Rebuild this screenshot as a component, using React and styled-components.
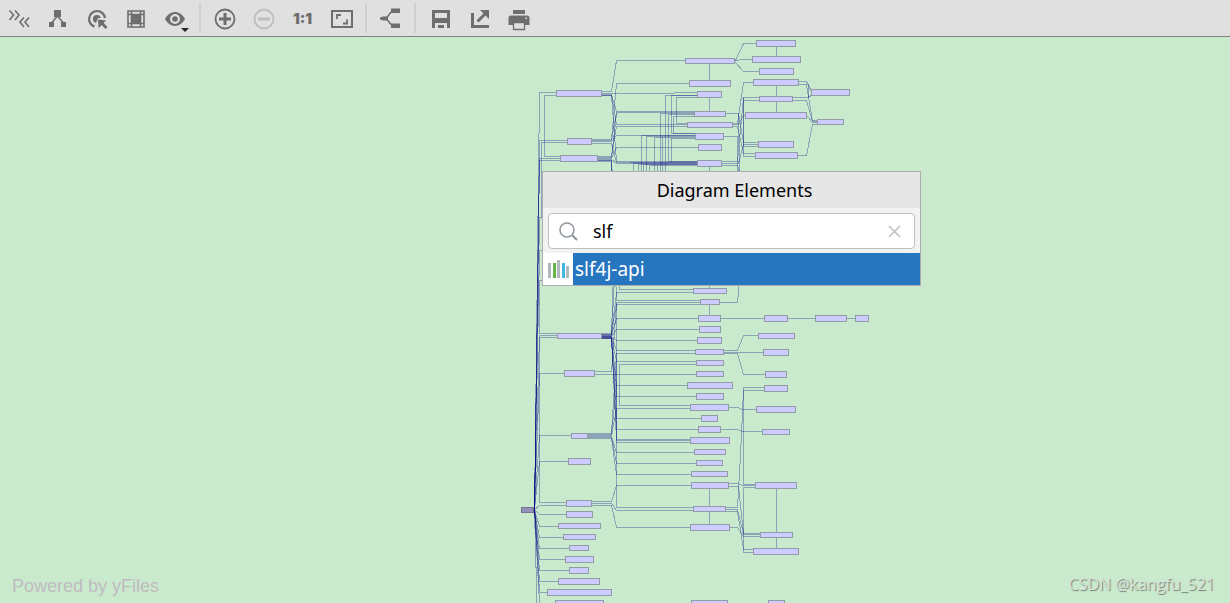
import React from 'react'
import styled, { createGlobalStyle } from 'styled-components'

const GlobalStyle = createGlobalStyle`
* {
  box-sizing: border-box;
}
body {
  margin: 0;
  background: #caeacd;
  font-family: 'Noto Sans', 'Open Sans', sans-serif;
}
`
const Page = styled.div`
display: flex;
flex-direction: column;
min-height: 100vh;
`
const Toolbar = styled.header`
display: flex;
align-items: center;
height: 37px;
background: #e0e0e0;
border-bottom: 1px solid #808080;
`
const ToolButton = styled.button`
display: flex;
align-items: center;
justify-content: center;
width: 39px;
height: 36px;
padding: 0;
border: 0;
background: none;
color: ${props => props.disabled ? '#bdbdbd' : '#6e6e6e'};
font: 900 15px Inter, 'Liberation Sans', sans-serif;
`
const Icon = styled.svg`
width: 25px;
height: 26px;
fill: currentColor;
overflow: visible;
`
const Separator = styled.span`
width: 2px;
height: 30px;
margin: 0 4px;
background: #cfcfcf;
`
const Canvas = styled.main`
position: relative;
flex: 1;
overflow: hidden;
`
const Graph = styled.svg`
position: absolute;
top: 0;
left: 0;
width: 1230px;
height: 566px;
shape-rendering: crispEdges;
`
const Edge = styled.path`
fill: none;
stroke: rgba(0, 0, 128, 0.3);
stroke-linecap: square;
`
const Node = styled.rect`
fill: ${props => props.$root ? '#9090b8' : '#ccccff'};
stroke: ${props => props.$root ? '#737390' : '#929ba6'};
`
const Popup = styled.section`
position: absolute;
top: 134px;
left: 542px;
width: 379px;
border: 1px solid #adadad;
background: #f2f2f2;
`
const PopupTitle = styled.h1`
margin: 0;
padding-left: 6px;
background: #e6e6e6;
font-size: 18px;
font-weight: 400;
line-height: 36px;
text-align: center;
color: #000;
`
const SearchBox = styled.label`
display: flex;
align-items: center;
height: 36px;
margin: 5px 5px 4px;
padding: 0 10px 0 9px;
border: 1px solid #c0c0c0;
border-radius: 4px;
background: #fff;
`
const SearchInput = styled.input`
flex: 1;
min-width: 0;
margin-left: 14px;
padding: 0;
border: 0;
outline: 0;
font: 18px 'Noto Sans', sans-serif;
color: #000;
`
const ClearButton = styled.button`
display: flex;
padding: 3px;
border: 0;
background: none;
`
const Results = styled.ul`
margin: 0;
padding: 0;
list-style: none;
`
const Result = styled.li`
display: flex;
height: 32px;
background: #fff;
`
const ResultIcon = styled.span`
display: flex;
align-items: center;
justify-content: center;
width: 30px;
`
const ResultName = styled.span`
flex: 1;
padding-left: 2px;
background: #2675bf;
color: #fff;
font-size: 19px;
line-height: 32px;
`
const Powered = styled.span`
position: absolute;
left: 12px;
bottom: 6px;
font: 18px/22px 'Liberation Sans', sans-serif;
color: #c0bac1;
`
const Author = styled.span`
position: absolute;
right: 15px;
bottom: 8px;
font: 16px/22px 'Open Sans', sans-serif;
color: #d9e2da;
text-shadow: 1px 1px 1px #6f7d71;
`

// x, y, width, height
const nodes = [
  [556, 90, 46, 7], [567, 138, 25, 7], [560, 155, 38, 7], [557, 333, 45, 6],
  [564, 370, 31, 7], [571, 433, 17, 6], [568, 458, 23, 7], [566, 500, 26, 7],
  [566, 511, 27, 7], [558, 523, 43, 6], [563, 534, 33, 6], [569, 545, 20, 6],
  [565, 556, 29, 7], [569, 567, 20, 7], [558, 578, 42, 7], [547, 589, 65, 7],
  [555, 600, 49, 7],

  [685, 58, 50, 6], [689, 80, 42, 7], [697, 91, 25, 7], [694, 111, 32, 6],
  [687, 122, 46, 6], [695, 133, 29, 7], [698, 144, 24, 7], [697, 160, 25, 7],
  [693, 288, 34, 6], [700, 299, 20, 6], [698, 315, 23, 7], [699, 326, 22, 7],
  [697, 337, 25, 7], [695, 349, 29, 6], [696, 360, 28, 6], [696, 371, 28, 6],
  [687, 382, 46, 7], [696, 393, 28, 7], [690, 404, 39, 7], [701, 415, 17, 7],
  [698, 426, 23, 7], [690, 437, 40, 7], [694, 449, 32, 6], [696, 460, 27, 6],
  [691, 471, 37, 6], [691, 482, 38, 7], [693, 506, 33, 6], [690, 524, 40, 7],
  [691, 600, 37, 7],

  [756, 40, 40, 7], [752, 56, 49, 7], [759, 68, 35, 7], [753, 79, 46, 7],
  [759, 96, 34, 6], [745, 112, 62, 7], [758, 141, 36, 7], [755, 152, 43, 7],
  [764, 315, 24, 7], [758, 333, 37, 6], [763, 349, 26, 7], [765, 371, 22, 7],
  [764, 385, 24, 7], [756, 406, 40, 7], [762, 429, 28, 6], [755, 482, 42, 7],
  [760, 532, 33, 6], [753, 548, 46, 7], [768, 600, 17, 7],

  [811, 89, 39, 7], [817, 119, 27, 6], [815, 315, 32, 7], [855, 315, 14, 7],
]

// root to first column: y, x of the node
const rootEdges = [
  [92, 556], [140, 567], [158, 560], [160, 560], [217, 545], [250, 545],
  [335, 557], [373, 564], [435, 571], [461, 568], [505, 566], [514, 566],
  [526, 558], [537, 563], [548, 569], [559, 565], [570, 569], [581, 558],
  [592, 547], [603, 555], [700, 555],
]

// first to second column: start x, start y, end y, end x
const midEdges = [
  [602, 91, 60, 685], [602, 94, 111, 694], [602, 95, 124, 687], [602, 95, 161, 697],
  [592, 139, 83, 689], [592, 140, 112, 694], [592, 141, 135, 695], [592, 143, 162, 697],
  [598, 156, 126, 687], [598, 157, 113, 616], [598, 158, 147, 698], [598, 159, 163, 697],
  [598, 160, 240, 690], [598, 161, 300, 700], [598, 160, 280, 690],
  [602, 333, 180, 697], [602, 334, 240, 697], [602, 334, 292, 693],
  [602, 335, 302, 700], [602, 335, 318, 698], [602, 336, 329, 699], [602, 336, 340, 697],
  [602, 336, 350, 695], [602, 337, 361, 696], [602, 337, 385, 687], [602, 337, 396, 696],
  [602, 338, 418, 701], [602, 338, 429, 698], [602, 338, 439, 690],
  [595, 371, 304, 700],
  [588, 433, 353, 616], [588, 434, 385, 616], [588, 435, 408, 690], [588, 436, 452, 694],
  [588, 437, 463, 696], [588, 438, 474, 691],
  [592, 501, 485, 691], [592, 503, 510, 693], [592, 505, 527, 690],
]

// third column links and everything that runs inside one column
const otherEdges = [
  'M556 95H544V156H560', 'M567 142H541V217', 'M545 280H539V333H557', 'M557 337H539V502H566',
  'M602 93H650L697 92', 'M595 374H696',
  'M697 95H665V172', 'M697 95H671V133H695', 'M697 97H676V123H687',
  'M694 113H660V172', 'M694 114H668V161H697', 'M694 116H673V133H695',
  'M695 135H641V172', 'M695 136H646V172', 'M695 137H654V172', 'M662 137V172',
  'M671 138V161', 'M695 138H671', 'M697 162H630',
  'M697 163H633V172', 'M697 164H638V172', 'M697 164H643V172', 'M697 165H649V172', 'M657 165V172',
  'M693 289H619V280', 'M616 303V353', 'M696 364H619V405H690', 'M695 353H616V439',
  'M690 442H616V361', 'M690 440H616V507H693',
  'M709 64V80', 'M709 98V111', 'M709 167V175', 'M709 280V288', 'M709 305V315', 'M709 489V506', 'M709 512V524',
  'M776 47V56', 'M776 86V96', 'M776 102V112', 'M776 489V532', 'M776 538V548',

  'M735 60L743 43H756', 'M735 60L743 59H752', 'M735 62L743 71H759',
  'M726 113H738L743 142H758', 'M733 123H737L743 82H753', 'M733 124H738L743 115H745',
  'M733 126H737L743 153H755', 'M724 136H737V172', 'M722 161H737L743 97H759',
  'M722 163H738L743 144H758', 'M722 165H737L740 175', 'M759 100H743V156H755',
  'M743 97V146H758', 'M738 113L739 175',
  'M799 81H806L811 91', 'M799 84H806L812 120H817', 'M808 97V84', 'M793 97H807L811 95',
  'M793 100H806L812 121H817', 'M807 116L812 122H817', 'M798 155H806L812 124H817',

  'M720 302H737L739 280', 'M721 318H764', 'M788 318H815', 'M847 318H855',
  'M724 350H737L743 335H758', 'M724 352H763', 'M724 353H737L743 374H765',
  'M729 407H738L741 409H756', 'M721 429H738L741 431H762',
  'M764 387H743V484H755', 'M764 390H743L740 455L737 507H726',
  'M729 483H738L741 485H755', 'M729 486H738L743 533H760', 'M726 509H737L743 534H760',
  'M726 511H737L743 549H753', 'M730 527H737L743 536H760', 'M755 487H743V552H753',
]

class Tools extends React.Component {
    render() {
        return (
            <Toolbar>
                <ToolButton aria-label='More'>
                    <Icon>
                        <path
                            d='M2.5 5.5L6.5 10L2.5 15M8 5.5L12 10L8 15M17 12.5L13 17L17 22M22 12.5L18 17L22 22'
                            fill='none' stroke='currentColor' strokeWidth='1.6'
                        />
                    </Icon>
                </ToolButton>
                <ToolButton aria-label='Layout'>
                    <Icon>
                        <path d='M8 5h7v7h-7zM3 17h5v5h-5zM15 17h5v5h-5z' />
                        <path d='M11.5 11L5.5 18M11.5 11L17.5 18' stroke='currentColor' strokeWidth='1.5' />
                    </Icon>
                </ToolButton>
                <ToolButton aria-label='Select'>
                    <Icon>
                        <path d='M9.5 21.6A8 8 0 1 1 20 13' fill='none' stroke='currentColor' strokeWidth='2.2' />
                        <path d='M11 17.9A4 4 0 1 1 15.8 13H13z' />
                        <path d='M13 14.5L21 15.5L18.7 18L22.5 22L20.5 24L16.8 20.2L13.5 23z' />
                    </Icon>
                </ToolButton>
                <ToolButton aria-label='Grid'>
                    <Icon>
                        <path d='M8 10h8v8h-8z' />
                        <path d='M4 6h16v16H4zM7.5 6V22M16.5 6V22M4 9.5H20M4 18.5H20' fill='none' stroke='currentColor' strokeWidth='1.6' />
                    </Icon>
                </ToolButton>
                <ToolButton aria-label='Visibility'>
                    <Icon>
                        <path fillRule='evenodd' d='M2 14C7 4.7 17 4.7 22 14C17 23.3 7 23.3 2 14zM12 9a5 5 0 1 0 0 10a5 5 0 1 0 0-10z' />
                        <circle cx='12' cy='14' r='2.8' />
                        <path d='M18 23h8l-4 4z' fill='#262626' />
                    </Icon>
                </ToolButton>
                <Separator />
                <ToolButton aria-label='Zoom in'>
                    <Icon>
                        <circle cx='13' cy='14' r='9.5' fill='none' stroke='currentColor' strokeWidth='1.8' />
                        <path d='M11.5 8h3v4.5h4.5v3h-4.5v4.5h-3v-4.5H7v-3h4.5z' />
                    </Icon>
                </ToolButton>
                <ToolButton aria-label='Zoom out' disabled>
                    <Icon>
                        <circle cx='13' cy='14' r='9.5' fill='none' stroke='currentColor' strokeWidth='1.8' />
                        <path d='M7 12.5h12v3H7z' />
                    </Icon>
                </ToolButton>
                <ToolButton>1:1</ToolButton>
                <ToolButton aria-label='Fit content'>
                    <Icon>
                        <path d='M3 6h20v16H3z' fill='none' stroke='currentColor' strokeWidth='2' />
                        <path d='M8 14V10H12M14 18.5H18V14.5' fill='none' stroke='currentColor' strokeWidth='1.8' />
                    </Icon>
                </ToolButton>
                <Separator />
                <ToolButton aria-label='Dependencies'>
                    <Icon>
                        <path d='M13 3.5h9v4.5h-9zM13 18.5h9v4.5h-9zM2 12.5l3-1h5v4h-5l-3-1z' />
                        <path d='M8 13.5L14 6M8 13.5L14 20.5' stroke='currentColor' strokeWidth='1.5' />
                    </Icon>
                </ToolButton>
                <Separator />
                <ToolButton aria-label='Save'>
                    <Icon>
                        <path fillRule='evenodd' d='M5 5h18v18H5zM8 8v5h12v-5zM8 18v5h12v-5z' />
                        <path d='M11 20h6v3h-6z' />
                    </Icon>
                </ToolButton>
                <ToolButton aria-label='Export'>
                    <Icon>
                        <path d='M6.5 8V21.5H23' fill='none' stroke='currentColor' strokeWidth='3' />
                        <path d='M14 5h9v9z' />
                        <path d='M11.5 16.5L20 8' stroke='currentColor' strokeWidth='3' />
                    </Icon>
                </ToolButton>
                <ToolButton aria-label='Print'>
                    <Icon>
                        <path d='M8 5h12v4H8z' />
                        <path fillRule='evenodd' d='M6 10.5h16q2.5 0 2.5 2.5v7h-21v-7q0-2.5 2.5-2.5zM20.5 12.5v1.5h1.500v-1.500z' />
                        <path d='M8.5 17.5h11v7h-11z' fill='#e0e0e0' stroke='currentColor' strokeWidth='1.3' />
                    </Icon>
                </ToolButton>
            </Toolbar>
        )
    }
}

class Diagram extends React.Component {
    render() {
        return (
            <Graph viewBox='0 37 1230 566' aria-hidden='true'>
                <g transform='translate(.5 .5)'>
                    {rootEdges.map(([y, x]) => <Edge key={'r' + y} d={`M534 509L539 ${y}H${x}`} />)}
                    {midEdges.map(([x, y, endY, endX], i) => (
                        <Edge key={'m' + i} d={`M${x} ${y}H611L616 ${endY}H${endX}`} />
                    ))}
                    {otherEdges.map((d, i) => <Edge key={'o' + i} d={d} />)}
                    {nodes.map(([x, y, w, h]) => (
                        <Node key={x + '-' + y} x={x} y={y} width={w - 1} height={h - 1} />
                    ))}
                    <Node $root x='521' y='507' width='12' height='5' />
                </g>
            </Graph>
        )
    }
}

class ElementsPopup extends React.Component {
    state = { query: 'slf' }

    render() {
        return (
            <Popup>
                <PopupTitle>Diagram Elements</PopupTitle>
                <SearchBox htmlFor='search'>
                    <svg width='21' height='21' fill='none' stroke='#8f979e' strokeWidth='1.5' aria-hidden='true'>
                        <circle cx='9' cy='9' r='7' />
                        <path d='M14 14L19 19' strokeWidth='2.2' />
                    </svg>
                    <SearchInput
                        id='search'
                        aria-label='Search elements'
                        value={this.state.query}
                        onChange={e => this.setState({ query: e.target.value })}
                    />
                    <ClearButton aria-label='Clear' onClick={() => this.setState({ query: '' })}>
                        <svg width='13' height='13' stroke='#bcc1c4' strokeWidth='1.5'>
                            <path d='M1 1L12 12M12 1L1 12' />
                        </svg>
                    </ClearButton>
                </SearchBox>
                <Results>
                    <Result>
                        <ResultIcon>
                            <svg width='24' height='20' aria-hidden='true'>
                                <path d='M2 4h3v15h-3zM11 1h3v18h-3zM20 7h3v12h-3z' fill='#afb7bd' />
                                <path d='M7 4h3v15h-3z' fill='#62b543' />
                                <path d='M16 4h3v15h-3z' fill='#40b6e0' />
                            </svg>
                        </ResultIcon>
                        <ResultName>slf4j-api</ResultName>
                    </Result>
                </Results>
            </Popup>
        )
    }
}

const App = () => (
    <Page>
        <GlobalStyle />
        <Tools />
        <Canvas>
            <Diagram />
            <ElementsPopup />
            <Powered>Powered by yFiles</Powered>
            <Author>CSDN @kangfu_521</Author>
        </Canvas>
    </Page>
)

export default App
